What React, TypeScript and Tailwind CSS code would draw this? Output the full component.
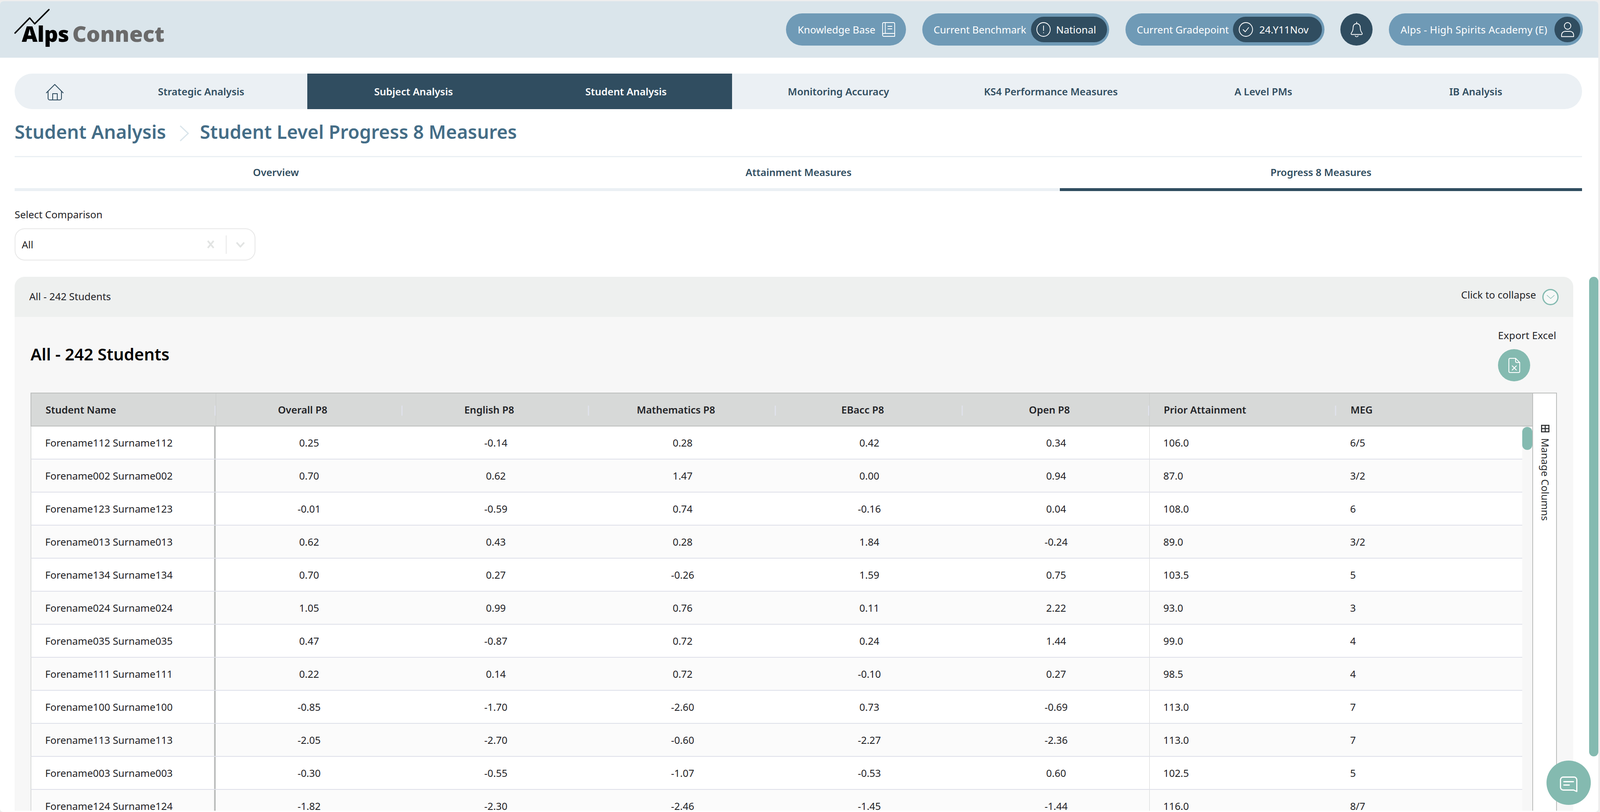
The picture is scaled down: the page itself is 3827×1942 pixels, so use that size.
const rows = [
  ["Forename112 Surname112", "0.25", "-0.14", "0.28", "0.42", "0.34", "106.0", "6/5"],
  ["Forename002 Surname002", "0.70", "0.62", "1.47", "0.00", "0.94", "87.0", "3/2"],
  ["Forename123 Surname123", "-0.01", "-0.59", "0.74", "-0.16", "0.04", "108.0", "6"],
  ["Forename013 Surname013", "0.62", "0.43", "0.28", "1.84", "-0.24", "89.0", "3/2"],
  ["Forename134 Surname134", "0.70", "0.27", "-0.26", "1.59", "0.75", "103.5", "5"],
  ["Forename024 Surname024", "1.05", "0.99", "0.76", "0.11", "2.22", "93.0", "3"],
  ["Forename035 Surname035", "0.47", "-0.87", "0.72", "0.24", "1.44", "99.0", "4"],
  ["Forename111 Surname111", "0.22", "0.14", "0.72", "-0.10", "0.27", "98.5", "4"],
  ["Forename100 Surname100", "-0.85", "-1.70", "-2.60", "0.73", "-0.69", "113.0", "7"],
  ["Forename113 Surname113", "-2.05", "-2.70", "-0.60", "-2.27", "-2.36", "113.0", "7"],
  ["Forename003 Surname003", "-0.30", "-0.55", "-1.07", "-0.53", "0.60", "102.5", "5"],
  ["Forename124 Surname124", "-1.82", "-2.30", "-2.46", "-1.45", "-1.44", "116.0", "8/7"],
];

const navItems = ["Strategic Analysis", "Subject Analysis", "Student Analysis", "Monitoring Accuracy", "KS4 Performance Measures", "A Level PMs", "IB Analysis"];
const centredHeads = ["Overall P8", "English P8", "Mathematics P8", "EBacc P8", "Open P8"];

function Handle() {
  return <span className="absolute right-0 top-[29px] h-[24px] w-[3px] bg-[#dfe1ea]" />;
}

function BookIcon() {
  return (
    <svg width="31" height="35" viewBox="0 0 31 35" fill="none" stroke="white" strokeWidth="1.8" strokeLinejoin="round">
      <path d="M1 29V4a3 3 0 0 1 3-3h23a3 3 0 0 1 3 3v23H4a3 3 0 0 0-3 3.5A3 3 0 0 0 4 34h26.5" />
      <path d="M7.5 1v26M13 10h11M13 16h11M30 27v7" />
    </svg>
  );
}

function AlertIcon() {
  return (
    <svg width="34" height="35" viewBox="0 0 34 35" fill="none" stroke="white" strokeWidth="1.8" strokeLinecap="round">
      <ellipse cx="17" cy="17.5" rx="16" ry="16.5" />
      <path d="M17 9v11M17 25v.5" />
    </svg>
  );
}

function CheckIcon() {
  return (
    <svg width="34" height="35" viewBox="0 0 34 35" fill="none" stroke="white" strokeWidth="1.8" strokeLinecap="round" strokeLinejoin="round">
      <ellipse cx="17" cy="17.5" rx="16" ry="16.5" />
      <path d="M10.5 18l5 5 8-10" />
    </svg>
  );
}

function BellIcon() {
  return (
    <svg width="30" height="38" viewBox="0 0 30 38" fill="none" stroke="white" strokeWidth="1.8" strokeLinecap="round" strokeLinejoin="round">
      <path d="M15 1v3.5M15 4.5c-5.5 0-8.5 4-8.5 9 0 6-1.5 10-4 13-1.5 2-1 4 1 4h23c2 0 2.500-2 1-4-2.500-3-4-7-4-13 0-5-3-9-8.500-9z" />
      <path d="M11.500 34c1 2.500 6 2.500 7 0" />
    </svg>
  );
}

function UserIcon() {
  return (
    <svg width="31" height="36" viewBox="0 0 31 36" fill="none" stroke="white" strokeWidth="1.8" strokeLinejoin="round">
      <ellipse cx="15.500" cy="9" rx="7.800" ry="8" />
      <path d="M1 34.500v-3c0-6 4-9.500 9-9.500h11c5 0 9 3.500 9 9.500v3z" />
    </svg>
  );
}

function HomeIcon() {
  return (
    <svg width="42" height="39" viewBox="0 0 42 39" fill="none" stroke="#304d60" strokeWidth="2" strokeLinecap="round" strokeLinejoin="round">
      <path d="M1 21L21 1l20 20" />
      <path d="M5 17v17a4 4 0 0 0 4 4h24a4 4 0 0 0 4-4V17" />
      <path d="M16 38V23h11v15" />
    </svg>
  );
}

function FileXIcon() {
  return (
    <svg width="28" height="36" viewBox="0 0 28 36" fill="none" stroke="white" strokeWidth="2" strokeLinecap="round" strokeLinejoin="round">
      <path d="M17 1H4a3 3 0 0 0-3 3v28a3 3 0 0 0 3 3h20a3 3 0 0 0 3-3V11z" />
      <path d="M17 1v7a3 3 0 0 0 3 3h7M9 19l10 10M19 19L9 29" />
    </svg>
  );
}

function ChatIcon() {
  return (
    <svg width="42" height="38" viewBox="0 0 42 38" fill="none" stroke="white" strokeWidth="2.800" strokeLinecap="round" strokeLinejoin="round">
      <path d="M8 1.500h26a6.500 6.500 0 0 1 6.500 6.500v28L33 32.500H8A6.500 6.500 0 0 1 1.500 26V8A6.500 6.500 0 0 1 8 1.500z" />
      <path d="M9.500 12.500h23M9.500 20.500h13" />
    </svg>
  );
}

export default function App() {
  return (
    <div className="relative h-[1942px] w-[3827px] overflow-hidden bg-[#eeeeee] pt-[3px] pr-[4px] font-['Noto_Sans',sans-serif] text-[24px] text-[#1f2226]">
      <div className="h-[1939px] overflow-hidden rounded-[8px] bg-white">
        <header className="relative flex h-[135px] items-center justify-end bg-[#dae5eb] pr-[37px] text-white">
          <div className="absolute left-0 top-0 h-[135px] w-[400px]">
            <svg className="absolute left-[34px] top-[18px]" width="86" height="60" viewBox="0 0 86 60" fill="none" stroke="black" strokeWidth="3.400" strokeLinecap="round" strokeLinejoin="round">
              <path d="M2 58L37 22l12 14L83 2" />
            </svg>
            <div className="absolute left-[52px] top-[44px] flex items-baseline font-['Lato',sans-serif] text-[52px] leading-[66px] font-black">
              <span className="text-black tracking-[-0.5px]">Alps</span>
              <span className="ml-[8px] text-[#6a6a6a]">Connect</span>
            </div>
          </div>

          <div className="flex h-[77px] w-[287px] items-center rounded-full bg-[#6f9ab6] pl-[28px]">
            <span className="w-[202px] whitespace-nowrap">Knowledge Base</span>
            <BookIcon />
          </div>
          <div className="ml-[39px] flex h-[77px] w-[447px] items-center rounded-full bg-[#6f9ab6] pl-[27px]">
            <span className="w-[233px] whitespace-nowrap">Current Benchmark</span>
            <div className="flex h-[61px] w-[182px] items-center rounded-full bg-[#304d60] pl-[13px]">
              <AlertIcon />
              <span className="ml-[13px]">National</span>
            </div>
          </div>
          <div className="ml-[39px] flex h-[77px] w-[476px] items-center rounded-full bg-[#6f9ab6] pl-[27px]">
            <span className="w-[230px] whitespace-nowrap">Current Gradepoint</span>
            <div className="flex h-[61px] w-[213px] items-center rounded-full bg-[#304d60] pl-[14px]">
              <CheckIcon />
              <span className="ml-[15px]">24.Y11Nov</span>
            </div>
          </div>
          <div className="ml-[38px] flex h-[77px] w-[77px] items-center justify-center rounded-full bg-[#304d60]">
            <BellIcon />
          </div>
          <div className="ml-[39px] flex h-[77px] w-[464px] items-center rounded-full bg-[#6f9ab6] pl-[28px]">
            <span className="w-[368px] tracking-[0.3px] whitespace-nowrap">Alps - High Spirits Academy (E)</span>
            <div className="flex h-[61px] w-[62px] items-center justify-center rounded-full bg-[#304d60]">
              <UserIcon />
            </div>
          </div>
        </header>

        <main className="pl-[35px]">
          <nav className="mt-[38px] flex h-[85px] w-[3749px] overflow-hidden rounded-[42px] bg-[#ebf0f4] font-semibold text-[#304d60]">
            <div className="flex w-[192px] items-center justify-center pt-[3px]">
              <HomeIcon />
            </div>
            {navItems.map((item, i) => (
              <div
                key={item}
                className={
                  i === 1 || i === 2
                    ? "flex w-[508.2px] items-center justify-center bg-[#304d60] text-white"
                    : "flex w-[508.2px] items-center justify-center"
                }
              >
                {item}
              </div>
            ))}
          </nav>

          <div className="flex h-[110px] items-center pb-[2px] text-[44.7px] font-semibold text-[#446d87]">
            <span>Student Analysis</span>
            <svg className="ml-[33px] mr-[26px] mt-[8px]" width="22" height="38" viewBox="0 0 22 38" fill="none" stroke="#dae5eb" strokeWidth="3">
              <path d="M1 1l19 18L1 37" />
            </svg>
            <span>Student Level Progress 8 Measures</span>
          </div>

          <div className="mt-[2px] h-[3px] w-[3749px] bg-[#ebf0f4]" />
          <div className="flex w-[3749px] font-semibold text-[#304d60]">
            <div className="h-[81px] w-[1250px] border-b-[7px] border-[#ebf0f4] pt-[18px] text-center">Overview</div>
            <div className="h-[81px] w-[1250px] border-b-[7px] border-[#ebf0f4] pt-[18px] text-center">Attainment Measures</div>
            <div className="h-[81px] w-[1249px] border-b-[7px] border-[#304d60] pt-[18px] text-center">Progress 8 Measures</div>
          </div>

          <div className="mt-[40px] leading-[32px]">Select Comparison</div>
          <div className="mt-[17px] flex h-[77px] w-[576px] items-center rounded-[24px] border-2 border-[#e8e8e8] pl-[15px]">
            <span className="w-[443px]">All</span>
            <svg width="18" height="19" viewBox="0 0 18 19" fill="none" stroke="#e2e4e3" strokeWidth="4">
              <path d="M2 1l14 17M16 1L2 18" />
            </svg>
            <span className="ml-[27px] h-[44px] w-[2px] bg-[#e8e8e8]" />
            <svg className="ml-[22px]" width="22" height="14" viewBox="0 0 22 14" fill="none" stroke="#e2e4e3" strokeWidth="4">
              <path d="M2 2l9 10 9-10" />
            </svg>
          </div>

          <section className="mt-[39px] h-[1277px] w-[3728px] overflow-hidden rounded-t-[24px] bg-[#f7f7f7]">
            <div className="flex h-[96px] items-center justify-between bg-[#eef0ef] pl-[35px] pr-[35px]">
              <span className="mb-[3px]">All - 242 Students</span>
              <div className="flex items-center">
                <span className="mb-[10px]">Click to collapse</span>
                <span className="ml-[15px] flex h-[39px] w-[39px] items-center justify-center rounded-full border-[3px] border-[#84bab0] bg-[#f6f8f7]">
                  <svg width="20" height="10" viewBox="0 0 20 10" fill="none" stroke="#84bab0" strokeWidth="1.200">
                    <path d="M1 1l9 8 9-8" />
                  </svg>
                </span>
              </div>
            </div>

            <div className="flex h-[181px] justify-between pl-[38px] pr-[39px]">
              <h2 className="mt-[60px] text-[39.6px] leading-[58px] font-semibold text-black">All - 242 Students</h2>
              <div className="w-[141px] pt-[28px]">
                <div className="leading-[32px] tracking-[0.2px] whitespace-nowrap">Export Excel</div>
                <div className="mt-[17px] flex h-[77px] w-[77px] items-center justify-center rounded-full bg-[#84bab0]">
                  <FileXIcon />
                </div>
              </div>
            </div>

            <div className="ml-[38px] flex w-[3651px]">
              <div className="relative w-[3592px]">
                <div className="grid h-[81px] grid-cols-[441px_repeat(7,446.7px)] border-y-2 border-l-2 border-[#bdbfbe] bg-[#d7d9d8] font-semibold">
                  <div className="relative flex items-center pl-[34px]">
                    Student Name
                    <Handle />
                  </div>
                  {centredHeads.map((h, i) => (
                    <div key={h} className={i === 0 ? "relative flex items-center justify-center border-l border-[#c8cac9] pr-[32px]" : "relative flex items-center justify-center pr-[32px]"}>
                      {h}
                      <Handle />
                    </div>
                  ))}
                  <div className="relative flex items-center border-l border-[#c8cac9] pl-[33px]">
                    Prior Attainment
                    <Handle />
                  </div>
                  <div className="flex items-center pl-[34px]">MEG</div>
                </div>

                {rows.map((row, r) => (
                  <div
                    key={row[0]}
                    className={
                      r % 2 === 0
                        ? "grid h-[79px] w-[3568px] grid-cols-[441px_repeat(7,446.7px)] border-b-2 border-l-2 border-b-[#dfe1ea] border-l-[#d9dbda] bg-white"
                        : "grid h-[79px] w-[3568px] grid-cols-[441px_repeat(7,446.7px)] border-b-2 border-l-2 border-b-[#dfe1ea] border-l-[#d9dbda] bg-[#fbfbfb]"
                    }
                  >
                    <div className="flex items-center border-r-[4px] border-[#bdbfbe] pl-[33px]">{row[0]}</div>
                    {row.slice(1, 6).map((v, i) => (
                      <div key={i} className="flex items-center justify-center">{v}</div>
                    ))}
                    <div className="flex items-center border-l border-[#d3d5d4] pl-[32px]">{row[6]}</div>
                    <div className="flex items-center pl-[33px]">{row[7]}</div>
                  </div>
                ))}

                <div className="absolute left-[3568px] top-[82px] h-[55px] w-[24px] rounded-[12px] bg-[#84bab0]" />
              </div>

              <div className="h-[1100px] w-[59px] border-x-2 border-t-2 border-[#bdbfbe] bg-white pl-[13px] pt-[75px]">
                <div className="flex items-center gap-[14px] leading-[32px] whitespace-nowrap text-[#2a2c2e] [writing-mode:vertical-rl]">
                  <svg width="20" height="18" viewBox="0 0 20 18" fill="none" stroke="#2a2c2e" strokeWidth="2.500">
                    <rect x="1.250" y="1.250" width="17.500" height="15.500" />
                    <path d="M10 1v16M1 9h18" />
                  </svg>
                  <span>Manage Columns</span>
                </div>
              </div>
            </div>
          </section>
        </main>
      </div>

      <div className="absolute left-[3801px] top-[662px] h-[1147px] w-[22px] rounded-[11px] bg-[#84bab0]" />
      <button className="absolute left-[3699px] top-[1819px] flex h-[106px] w-[106px] items-center justify-center rounded-full bg-[#84bab0] pt-[7px]">
        <ChatIcon />
      </button>
    </div>
  );
}
